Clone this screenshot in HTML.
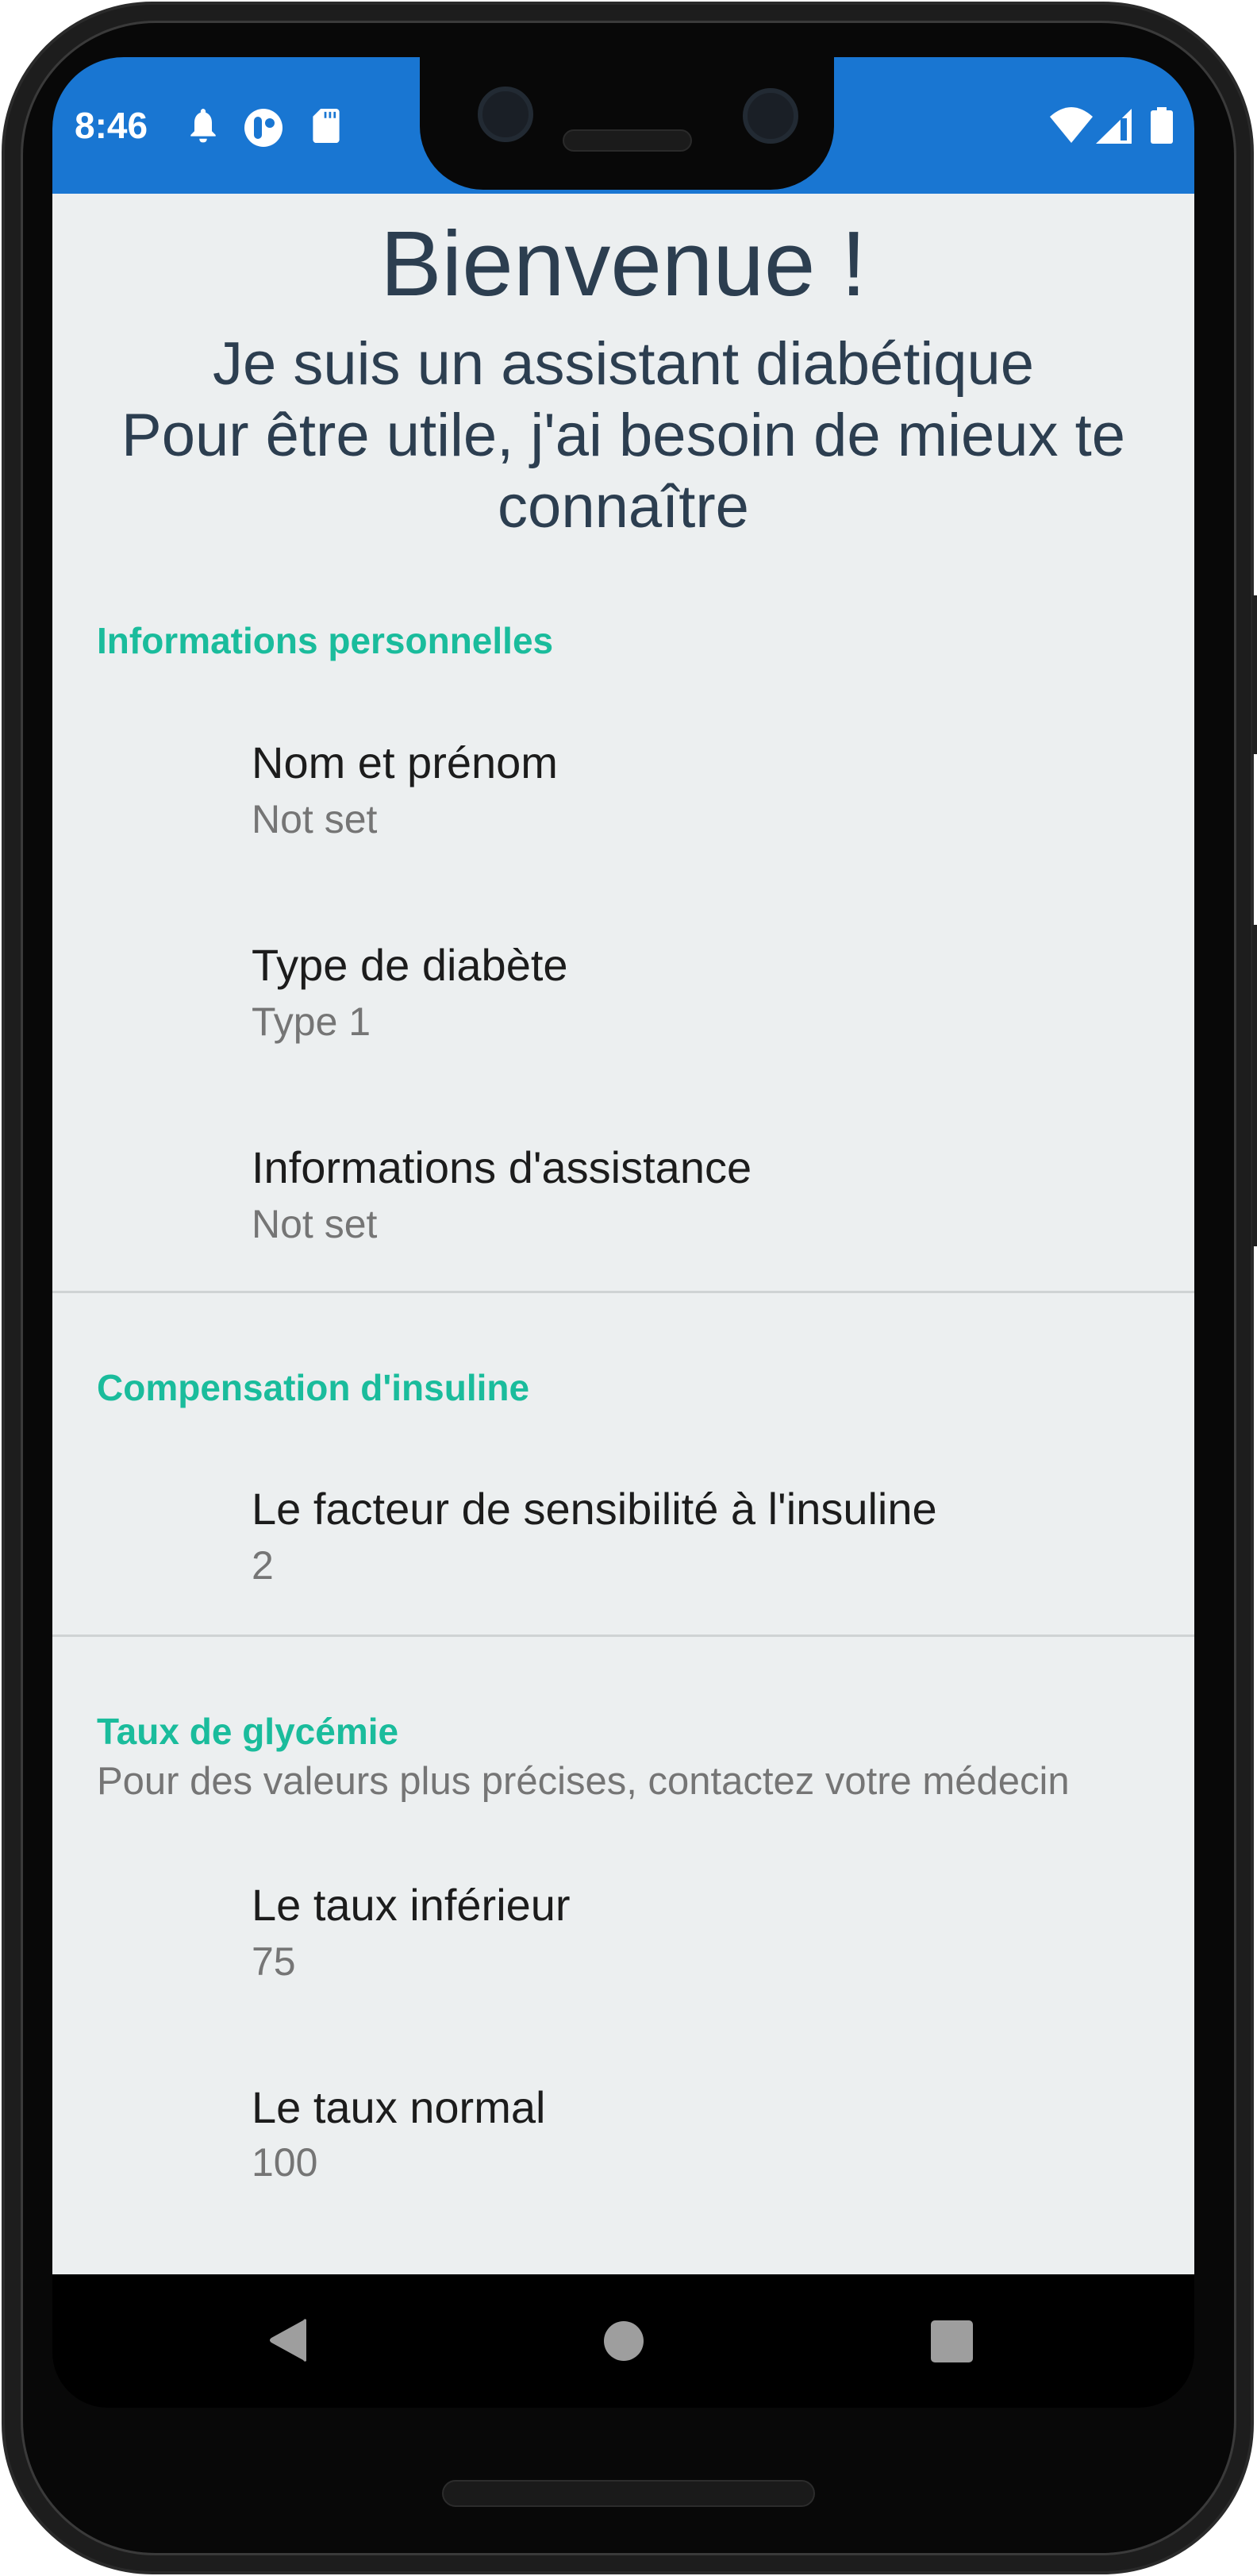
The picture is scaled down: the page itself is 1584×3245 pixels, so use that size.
<!DOCTYPE html>
<html><head><meta charset="utf-8"><style>
*{margin:0;padding:0;box-sizing:border-box}
body{width:1584px;height:3245px;background:#fff;position:relative;overflow:hidden;font-family:"Liberation Sans",sans-serif}
.abs{position:absolute}
.phone{left:2px;top:2px;width:1578px;height:3241px;border-radius:190px;background:#1d1d1d;border:4px solid #2a2a2a}
.inner{left:26px;top:26px;width:1532px;height:3193px;border-radius:170px;background:#080808;border:3px solid #3a3a3a}
.screen{left:66px;top:72px;width:1439px;height:2961px;border-radius:90px 90px 70px 70px;overflow:hidden;background:#000}
.status{left:0;top:0;width:1439px;height:172px;background:#1976d2}
.content{left:0;top:172px;width:1439px;height:2621px;background:#eceff0}
.t{position:absolute;white-space:nowrap}
.h{left:56px;color:#1abc9c;font-size:46px;font-weight:bold}
.it{left:251px;color:#1c1c1c;font-size:56px}
.sb{left:251px;color:#757575;font-size:50px}
.div{left:0;width:1439px;height:3px;background:#cfd3d4}
.c{width:1439px;text-align:center;color:#2c3e50}
</style></head><body>
<div class="abs phone"></div>
<div class="abs inner"></div>
<div class="abs" style="left:1578px;top:750px;width:6px;height:200px;background:#222"></div>
<div class="abs" style="left:1578px;top:1165px;width:6px;height:405px;background:#222"></div>
<div class="abs screen">
 <div class="abs status"></div>
 <div class="abs content">
  <div class="t c" style="top:23px;font-size:116px;line-height:130px">Bienvenue !</div>
  <div class="t c" style="top:170px;font-size:76px;line-height:90px">Je suis un assistant diabétique<br>Pour être utile, j'ai besoin de mieux te<br>connaître</div>
  <div class="t h" style="top:536px">Informations personnelles</div>
  <div class="t it" style="top:684px">Nom et prénom</div>
  <div class="t sb" style="top:759px">Not set</div>
  <div class="t it" style="top:939px">Type de diabète</div>
  <div class="t sb" style="top:1014px">Type 1</div>
  <div class="t it" style="top:1194px">Informations d'assistance</div>
  <div class="t sb" style="top:1269px">Not set</div>
  <div class="abs div" style="top:1382px"></div>
  <div class="t h" style="top:1477px">Compensation d'insuline</div>
  <div class="t it" style="top:1624px">Le facteur de sensibilité à l'insuline</div>
  <div class="t sb" style="top:1699px">2</div>
  <div class="abs div" style="top:1815px"></div>
  <div class="t h" style="top:1910px">Taux de glycémie</div>
  <div class="t" style="left:56px;top:1972px;color:#757575;font-size:49px">Pour des valeurs plus précises, contactez votre médecin</div>
  <div class="t it" style="top:2123px">Le taux inférieur</div>
  <div class="t sb" style="top:2198px">75</div>
  <div class="t it" style="top:2378px">Le taux normal</div>
  <div class="t sb" style="top:2451px">100</div>
 </div>
 <!-- notch -->
 <div class="abs" style="left:463px;top:0;width:522px;height:167px;background:#080808;border-radius:0 0 80px 80px"></div>
 <div class="abs" style="left:536px;top:37px;width:70px;height:70px;border-radius:50%;background:#1a1f26;border:6px solid #222a33"></div>
 <div class="abs" style="left:870px;top:39px;width:70px;height:70px;border-radius:50%;background:#1a1f26;border:6px solid #222a33"></div>
 <div class="abs" style="left:643px;top:91px;width:163px;height:28px;border-radius:14px;background:#1b1b1b;border:2px solid #2a2a2a"></div>
 <!-- status -->
 <div class="t" style="left:28px;top:61px;color:#fff;font-size:46px;line-height:50px;font-weight:bold">8:46</div>
 <svg class="abs" style="left:171px;top:65px" width="38" height="44" viewBox="0 0 24 28"><path d="M12 0c1 0 2 1 2 2v1c3 1 5 4 5 8v7l3 3v1H2v-1l3-3v-7c0-4 2-7 5-8V2c0-1 1-2 2-2zM9 24h6c0 2-1 3-3 3s-3-1-3-3z" fill="#fff"/></svg>
 <svg class="abs" style="left:242px;top:65px" width="48" height="48" viewBox="0 0 24 24"><circle cx="12" cy="12" r="12" fill="#fff"/><rect x="6" y="5" width="5" height="14" rx="2.5" fill="#1976d2"/><circle cx="16" cy="9" r="3" fill="#1976d2"/></svg>
 <svg class="abs" style="left:328px;top:65px" width="34" height="43" viewBox="0 0 17 22"><path d="M5 0h10c1 0 2 1 2 2v18c0 1-1 2-2 2H2c-1 0-2-1-2-2V5z" fill="#fff"/><path d="M8 2v4M11 2v4M14 2v4" stroke="#1976d2" stroke-width="1.4"/></svg>
 <svg class="abs" style="left:1257px;top:63px" width="54" height="45" viewBox="0 0 54 45"><path d="M0 12Q27-12 54 12L27 45z" fill="#fff"/></svg>
 <svg class="abs" style="left:1315px;top:65px" width="45" height="44" viewBox="0 0 45 44"><path d="M45 0V44H0z" fill="#fff"/><path d="M31 12h8v28h-8z" fill="#1976d2"/></svg>
 <svg class="abs" style="left:1384px;top:63px" width="28" height="46" viewBox="0 0 28 46"><rect x="8" y="0" width="12" height="5" fill="#fff"/><rect x="0" y="4" width="28" height="42" rx="3" fill="#fff"/></svg>
 <!-- nav -->
 <svg class="abs" style="left:272px;top:2848px" width="52" height="56" viewBox="0 0 52 56"><path d="M48 2V54Q46 56 44 53L4 31Q0 28 4 25L44 3Q46 0 48 2z" fill="#9e9e9e"/></svg>
 <div class="abs" style="left:695px;top:2852px;width:50px;height:50px;border-radius:50%;background:#9e9e9e"></div>
 <div class="abs" style="left:1107px;top:2851px;width:53px;height:53px;border-radius:5px;background:#9e9e9e"></div>
</div>
<div class="abs" style="left:557px;top:3124px;width:470px;height:34px;border-radius:17px;background:#1a1a1a;border:2px solid #2c2c2c"></div>
</body></html>
